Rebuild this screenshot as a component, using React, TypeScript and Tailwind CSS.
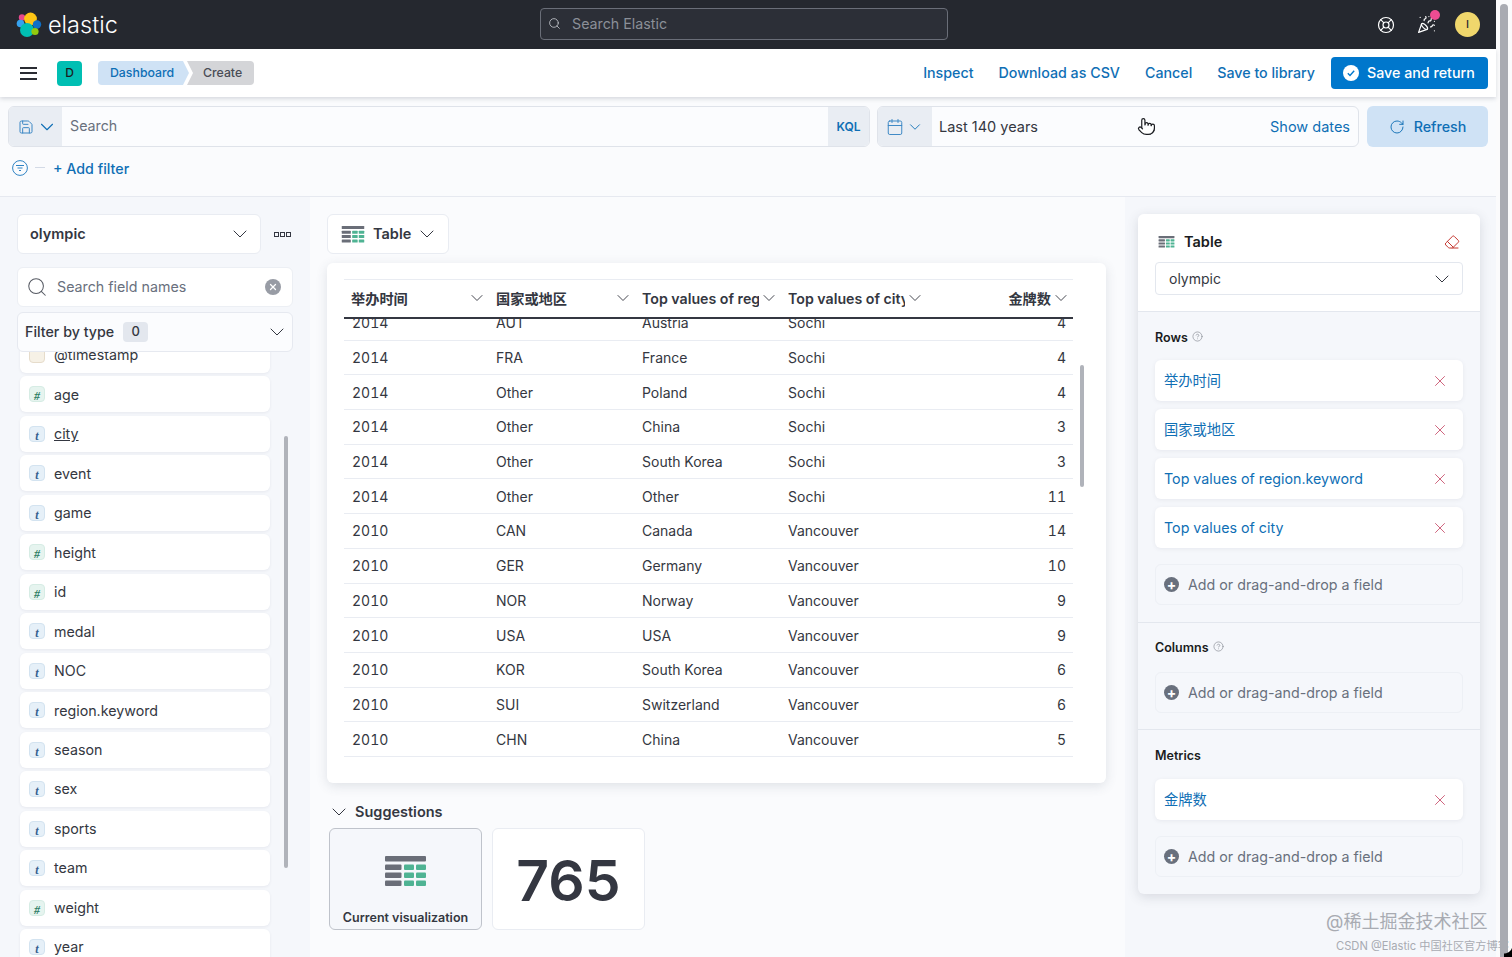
import { Calendar, ChevronDown, CircleHelp, Eraser, LifeBuoy, PartyPopper, Pointer, RotateCw, Save, Search, X } from "lucide-react";

const fields = [
  { name: "@timestamp", type: "d" },
  { name: "age", type: "#" },
  { name: "city", type: "t" },
  { name: "event", type: "t" },
  { name: "game", type: "t" },
  { name: "height", type: "#" },
  { name: "id", type: "#" },
  { name: "medal", type: "t" },
  { name: "NOC", type: "t" },
  { name: "region.keyword", type: "t" },
  { name: "season", type: "t" },
  { name: "sex", type: "t" },
  { name: "sports", type: "t" },
  { name: "team", type: "t" },
  { name: "weight", type: "#" },
  { name: "year", type: "t" }
];

const rows = [
  ["2014", "AUT", "Austria", "Sochi", "4"],
  ["2014", "FRA", "France", "Sochi", "4"],
  ["2014", "Other", "Poland", "Sochi", "4"],
  ["2014", "Other", "China", "Sochi", "3"],
  ["2014", "Other", "South Korea", "Sochi", "3"],
  ["2014", "Other", "Other", "Sochi", "11"],
  ["2010", "CAN", "Canada", "Vancouver", "14"],
  ["2010", "GER", "Germany", "Vancouver", "10"],
  ["2010", "NOR", "Norway", "Vancouver", "9"],
  ["2010", "USA", "USA", "Vancouver", "9"],
  ["2010", "KOR", "South Korea", "Vancouver", "6"],
  ["2010", "SUI", "Switzerland", "Vancouver", "6"],
  ["2010", "CHN", "China", "Vancouver", "5"]
];

const headers = ["举办时间", "国家或地区", "Top values of region.keyword", "Top values of city"];

function TableGlyph({ className }: { className: string }) {
  return (
    <svg viewBox="0 0 41 31" className={className}>
      <rect x="0" y="0" width="41" height="5.5" rx="1" fill="#6a6e78" />
      {[8.5, 16.5, 24.5].map((y) => (
        <g key={y}>
          <rect x="0" y={y} width="16.5" height="5.5" rx="1" fill="#6a6e78" />
          <rect x="19" y={y} width="10" height="5.5" rx="1" fill="#4fb393" />
          <rect x="31" y={y} width="10" height="5.5" rx="1" fill="#4fb393" />
        </g>
      ))}
    </svg>
  );
}

function ElasticLogo() {
  return (
    <svg viewBox="0 0 26 26" className="h-[26px] w-[26px]">
      <circle cx="6" cy="5.5" r="3.2" fill="#e8488b" />
      <circle cx="14.5" cy="7" r="6.4" fill="#fec514" />
      <circle cx="4.5" cy="11.5" r="3.8" fill="#36a2ef" />
      <circle cx="21" cy="12.5" r="4.2" fill="#0f6fc6" />
      <circle cx="11" cy="18" r="7" fill="#00bfb3" />
      <circle cx="19" cy="19.5" r="3.6" fill="#93c90e" />
    </svg>
  );
}

function PlusDot() {
  return (
    <span className="relative grid h-[15px] w-[15px] shrink-0 place-items-center rounded-full bg-[#69707d] text-[14px] font-bold leading-none text-white">
      +
    </span>
  );
}

function FieldIcon({ type }: { type: string }) {
  if (type === "d") {
    return <span className="h-[16px] w-[16px] rounded border border-[#e6dccb] bg-[#f6f1e6]" />;
  }
  const numeric = type === "#";
  return (
    <span
      className={
        numeric
          ? "grid h-[16px] w-[16px] place-items-center rounded border border-[#d6ece4] bg-[#e6f4ef] font-['Liberation_Serif',serif] text-[12px] font-bold italic text-[#2f7f65]"
          : "grid h-[16px] w-[16px] place-items-center rounded border border-[#d3e3f0] bg-[#e6f0f8] font-['Liberation_Serif',serif] text-[12px] font-bold italic text-[#35618f]"
      }
    >
      {type}
    </span>
  );
}

function AddField() {
  return (
    <div className="flex h-[41px] items-center gap-[9px] rounded-md border border-[#edf0f5] px-[8px] text-[14.25px] text-[#69707d]">
      <PlusDot />
      <span>Add or drag-and-drop a field</span>
    </div>
  );
}

function DimensionItem({ label }: { label: string }) {
  return (
    <div className="flex h-[41px] items-center justify-between rounded-md bg-white pl-[9px] pr-[14px] text-[14.25px] text-[#0f6fb5] shadow-[0_1px_4px_rgba(60,70,90,0.08)]">
      <span>{label}</span>
      <X className="h-[18px] w-[18px] text-[#c9536f]" strokeWidth={1.2} />
    </div>
  );
}

export default function App() {
  return (
    <div className="relative flex h-[957px] w-[1512px] overflow-hidden bg-[#f5f7fb] font-['Inter','Noto_Sans_CJK_SC',sans-serif] text-[#343741]">
      <div className="flex w-[1496px] shrink-0 flex-col">
        {/* top nav */}
        <header className="flex h-[49px] shrink-0 items-center justify-between bg-[#25282f] pl-[16px] pr-[16px] text-white">
          <div className="flex w-[524px] items-center gap-[6px]">
            <ElasticLogo />
            <span className="text-[23.5px] font-light leading-none">elastic</span>
          </div>
          <div className="mb-[2px] flex h-[32px] w-[408px] items-center gap-[11px] rounded border border-[#6a6e78] bg-[#2c2f37] px-[7px] text-[14.25px] text-[#8b8f98]">
            <Search className="h-[13px] w-[13px] text-[#c8cad0]" strokeWidth={1.5} />
            <span>Search Elastic</span>
          </div>
          <div className="flex w-[532px] items-center justify-end">
            <LifeBuoy className="mr-[22px] h-[18px] w-[18px]" strokeWidth={1.6} />
            <span className="relative mr-[19px]">
              <PartyPopper className="h-[19px] w-[19px]" strokeWidth={1.5} />
              <span className="absolute -right-[4px] -top-[5px] h-[10px] w-[10px] rounded-full bg-[#ee4c92]" />
            </span>
            <span className="grid h-[25px] w-[25px] place-items-center rounded-full bg-[#f0d76c] text-[11px] font-medium text-[#25282f]">I</span>
          </div>
        </header>

        {/* app bar */}
        <div className="relative z-10 flex h-[48px] shrink-0 items-center justify-between bg-white pl-[20px] pr-[8px] shadow-[0_2px_4px_rgba(60,70,90,0.18)]">
          <div className="flex items-center">
            <span className="flex w-[17px] flex-col gap-[3.5px]">
              <span className="h-[2px] bg-[#2a2c33]" />
              <span className="h-[2px] bg-[#2a2c33]" />
              <span className="h-[2px] bg-[#2a2c33]" />
            </span>
            <span className="ml-[20px] grid h-[25px] w-[25px] place-items-center rounded bg-[#00bfb3] text-[12px] font-medium text-[#1a1c21]">D</span>
            <div className="ml-[16px] flex h-[24px] text-[12.3px] font-medium">
              <span className="z-10 flex w-[91px] items-center rounded-l bg-[#cfe2f5] pl-[12px] text-[#0f6fb5] [clip-path:polygon(0_0,calc(100%-6px)_0,100%_50%,calc(100%-6px)_100%,0_100%)]">Dashboard</span>
              <span className="-ml-[2px] flex w-[67px] items-center rounded-r bg-[#d4d5d8] pl-[16px] text-[#494c55] [clip-path:polygon(0_0,100%_0,100%_100%,0_100%,6px_50%)]">Create</span>
            </div>
          </div>
          <div className="flex items-center gap-[25px] text-[14.25px] font-medium text-[#0f6fb5]">
            <span>Inspect</span>
            <span>Download as CSV</span>
            <span>Cancel</span>
            <span className="mr-[-9px]">Save to library</span>
            <button className="flex h-[32px] w-[157px] items-center gap-[8px] rounded bg-[#0077cc] pl-[12px] text-[14.25px] font-medium text-white">
              <span className="grid h-[16px] w-[16px] place-items-center rounded-full bg-white">
                <svg viewBox="0 0 16 16" className="h-[16px] w-[16px]">
                  <path d="M4.8 8.2l2.2 2.2 4.2-4.6" fill="none" stroke="#0077cc" strokeWidth="1.4" />
                </svg>
              </span>
              Save and return
            </button>
          </div>
        </div>

        {/* query bar */}
        <div className="h-[100px] shrink-0 border-b border-[#e6e9f0] bg-[#fafbfd] px-[8px] pt-[9px]">
          <div className="flex h-[41px] gap-[7px]">
            <div className="flex w-[862px] overflow-hidden rounded-md border border-[#dfe3ea] bg-[#fbfcfe]">
              <div className="flex w-[53px] items-center gap-[2px] bg-[#e9edf3] pl-[9px] text-[#0f6fb5]">
                <Save className="h-[16px] w-[16px] text-[#3b87c4]" strokeWidth={1.5} />
                <ChevronDown className="h-[22px] w-[22px]" strokeWidth={1.2} />
              </div>
              <div className="flex flex-1 items-center pb-[2px] pl-[8px] text-[14.25px] text-[#69707d]">Search</div>
              <div className="flex w-[41px] items-center justify-center bg-[#e9edf3] text-[12px] font-semibold text-[#0f6fb5]">KQL</div>
            </div>
            <div className="flex w-[482px] overflow-hidden rounded-md border border-[#dfe3ea] bg-[#fbfcfe]">
              <div className="flex w-[54px] items-center gap-[2px] bg-[#e9edf3] pl-[8px] text-[#0f6fb5]">
                <Calendar className="h-[18px] w-[18px] text-[#3b87c4]" strokeWidth={1.3} />
                <ChevronDown className="h-[18px] w-[18px]" strokeWidth={1.2} />
              </div>
              <div className="flex flex-1 items-center justify-between pl-[7px] pr-[8px] text-[14.5px]">
                <span>Last 140 years</span>
                <span className="text-[#0f6fb5]">Show dates</span>
              </div>
            </div>
            <button className="ml-[1px] flex w-[121px] items-center justify-center gap-[9px] rounded-md bg-[#cfe2f5] text-[14.25px] font-medium text-[#0f6fb5]">
              <RotateCw className="h-[16px] w-[16px]" strokeWidth={1.4} />
              Refresh
            </button>
          </div>
          <div className="mt-[10px] flex h-[24px] items-center pl-[4px]">
            <svg viewBox="0 0 16 16" className="-mt-[3px] h-[16px] w-[16px] text-[#2f83c4]">
              <circle cx="8" cy="8" r="7.4" fill="none" stroke="currentColor" />
              <path d="M4 5.5h8M5.5 8h5M7 10.5h2" stroke="currentColor" />
            </svg>
            <span className="-mt-[3px] ml-[7px] h-px w-[10px] bg-[#d3dae6]" />
            <span className="ml-[8px] text-[14.25px] font-medium text-[#0f6fb5]">+ Add filter</span>
          </div>
        </div>

        <div className="flex min-h-0 flex-1">
          {/* field list */}
          <aside className="relative w-[310px] shrink-0 overflow-hidden bg-[#f5f7fb] pl-[17px] pt-[17px]">
            <div className="flex items-center">
              <div className="flex h-[40px] w-[244px] items-center justify-between rounded-md border border-[#e9ecf2] bg-white pl-[12px] pr-[8px] text-[14.5px] font-semibold">
                olympic
                <ChevronDown className="h-[24px] w-[24px]" strokeWidth={1} />
              </div>
              <span className="ml-[13px] flex gap-[1px]">
                <span className="h-[5px] w-[5px] border border-[#343741]" />
                <span className="h-[5px] w-[5px] border border-[#343741]" />
                <span className="h-[5px] w-[5px] border border-[#343741]" />
              </span>
            </div>
            <div className="relative z-10 mt-[13px] flex h-[40px] w-[276px] items-center rounded-md border border-[#eceff4] bg-white pl-[8px] pr-[11px] text-[14.25px] text-[#69707d]">
              <Search className="h-[22px] w-[22px] text-[#555962]" strokeWidth={1.1} />
              <span className="ml-[9px] flex-1">Search field names</span>
              <span className="grid h-[16px] w-[16px] place-items-center rounded-full bg-[#989ca5]">
                <X className="h-[10px] w-[10px] text-white" strokeWidth={3} />
              </span>
            </div>
            <div className="relative z-10 mt-[5px] flex h-[40px] w-[276px] items-center justify-between rounded-md border border-[#e6e9f0] bg-[#fbfcfe] pl-[7px] pr-[3px] text-[14.25px] font-medium">
              <span className="flex items-center gap-[9px]">
                Filter by type
                <span className="grid h-[20px] w-[25px] place-items-center rounded bg-[#e3e7ee] text-[13px]">0</span>
              </span>
              <ChevronDown className="h-[24px] w-[24px]" strokeWidth={1} />
            </div>
            <div className="-mt-[15px] ml-[3px] flex w-[250px] flex-col gap-[3.47px]">
              {fields.map((field) => (
                <div key={field.name} className="flex h-[36px] shrink-0 items-center gap-[9px] rounded-md bg-white pl-[9px] text-[14.25px] shadow-[0_1px_3px_rgba(60,70,90,0.08)]">
                  <FieldIcon type={field.type} />
                  <span className={field.name === "city" ? "underline" : ""}>{field.name}</span>
                </div>
              ))}
            </div>
            <span className="absolute left-[284px] top-[239px] h-[432px] w-[4px] rounded-full bg-[#b0b3ba]" />
          </aside>

          {/* workspace */}
          <main className="w-[815px] shrink-0 bg-[#fafbfd] pl-[17px] pt-[17px]">
            <div className="flex h-[40px] w-[122px] items-center rounded-md border border-[#e9ecf2] bg-white pl-[12px] text-[14.5px] font-semibold">
              <TableGlyph className="h-[17px] w-[26px]" />
              <span className="ml-[7px]">Table</span>
              <ChevronDown className="ml-[4px] h-[24px] w-[24px]" strokeWidth={1} />
            </div>
            <section className="relative mt-[9px] h-[520px] w-[779px] rounded-md bg-white px-[17px] pt-[16px] shadow-[0_3px_12px_rgba(60,70,90,0.14)]">
              <div className="w-[729px] border-t border-[#e9ecf2]">
                <div className="flex h-[39px] items-center border-b-2 border-[#343741] text-[14.2px] font-semibold">
                  {headers.map((header, index) => (
                    <div key={header} className={index === 0 ? "flex w-[144px] shrink-0 items-center pl-[7px] pr-[1px]" : "flex w-[146px] shrink-0 items-center pl-[8px] pr-[1px]"}>
                      <span className="min-w-0 flex-1 overflow-hidden whitespace-nowrap">{header}</span>
                      <ChevronDown className="h-[20px] w-[20px] shrink-0" strokeWidth={1.1} />
                    </div>
                  ))}
                  <div className="flex flex-1 items-center justify-end pr-[2px]">
                    金牌数
                    <ChevronDown className="h-[20px] w-[20px]" strokeWidth={1.1} />
                  </div>
                </div>
                <div className="h-[439px] overflow-hidden">
                  <div className="-mt-[13px]">
                    {rows.map((row) => (
                      <div key={row.join()} className="flex h-[34.7px] items-center border-b border-[#e9ecf2] text-[14px] tabular-nums">
                        {row.slice(0, 4).map((cell, index) => (
                          <div key={index} className={index === 0 ? "w-[144px] shrink-0 pl-[8px]" : "w-[146px] shrink-0 pl-[8px]"}>{cell}</div>
                        ))}
                        <div className="flex-1 pr-[7px] text-right">{row[4]}</div>
                      </div>
                    ))}
                  </div>
                </div>
              </div>
              <span className="absolute left-[753px] top-[102px] h-[122px] w-[4px] rounded-full bg-[#b0b3ba]" />
            </section>
            <div className="mt-[17px] flex items-center text-[14.5px] font-semibold">
              <ChevronDown className="h-[24px] w-[24px]" strokeWidth={1} />
              <span className="ml-[4px]">Suggestions</span>
            </div>
            <div className="mt-[4px] flex gap-[10px] pl-[2px]">
              <div className="flex h-[102px] w-[153px] flex-col items-center rounded-md border border-[#bfc3cb] bg-[#f5f7fb] pt-[27px]">
                <TableGlyph className="h-[31px] w-[41px]" />
                <span className="mt-[22px] text-[12.5px] font-semibold">Current visualization</span>
              </div>
              <div className="grid h-[102px] w-[153px] place-items-center rounded-md border border-[#e9ecf2] bg-white pt-[2px] text-[57px] font-semibold leading-none">765</div>
            </div>
          </main>

          {/* config panel */}
          <aside className="min-w-0 flex-1 pl-[13px] pt-[17px]">
            <div className="w-[342px] overflow-hidden rounded-md bg-[#f5f7fb] shadow-[0_3px_12px_rgba(60,70,90,0.16)]">
              <div className="h-[98px] border-b border-[#e3e7ee] bg-white px-[17px] pt-[17px]">
                <div className="flex h-[22px] items-center justify-between pl-[3px] pr-[3px]">
                  <span className="flex items-center gap-[9px] text-[14.5px] font-semibold text-[#1a1c21]">
                    <TableGlyph className="h-[12px] w-[17px]" />
                    Table
                  </span>
                  <Eraser className="h-[16px] w-[16px] text-[#c4362f]" strokeWidth={1.5} />
                </div>
                <div className="mt-[9px] flex h-[33px] w-[308px] items-center justify-between rounded border border-[#e3e7ee] bg-white pl-[13px] pr-[8px] text-[14px]">
                  olympic
                  <ChevronDown className="h-[24px] w-[24px]" strokeWidth={1} />
                </div>
              </div>
              <div className="h-[311px] border-b border-[#e3e7ee] px-[17px] pt-[18px]">
                <div className="flex h-[16px] items-center gap-[4px] text-[12.5px] font-semibold text-[#1a1c21]">
                  Rows
                  <CircleHelp className="-mt-[3px] h-[11px] w-[11px] text-[#8b8f98]" strokeWidth={1.5} />
                </div>
                <div className="mt-[14px] flex w-[308px] flex-col gap-[8px]">
                  <DimensionItem label="举办时间" />
                  <DimensionItem label="国家或地区" />
                  <DimensionItem label="Top values of region.keyword" />
                  <DimensionItem label="Top values of city" />
                </div>
                <div className="mt-[16px] w-[308px]">
                  <AddField />
                </div>
              </div>
              <div className="h-[107px] border-b border-[#e3e7ee] px-[17px] pt-[17px]">
                <div className="flex h-[16px] items-center gap-[4px] text-[12.5px] font-semibold text-[#1a1c21]">
                  Columns
                  <CircleHelp className="-mt-[3px] h-[11px] w-[11px] text-[#8b8f98]" strokeWidth={1.5} />
                </div>
                <div className="mt-[16px] w-[308px]">
                  <AddField />
                </div>
              </div>
              <div className="h-[164px] px-[17px] pt-[18px]">
                <div className="flex h-[16px] items-center text-[12.5px] font-semibold text-[#1a1c21]">Metrics</div>
                <div className="mt-[15px] w-[308px]">
                  <DimensionItem label="金牌数" />
                </div>
                <div className="mt-[16px] w-[308px]">
                  <AddField />
                </div>
              </div>
            </div>
          </aside>
        </div>
      </div>

      {/* page scrollbar */}
      <div className="flex-1 bg-[#fbfbfc] pl-[4px] pt-[4px]">
        <div className="h-full w-[8px] rounded-t-full bg-[#a9abb2]" />
      </div>

      {/* cursor + watermark sit over the capture */}
      <Pointer className="absolute left-[1137px] top-[117px] h-[19px] w-[19px] fill-white text-[#1a1c21]" strokeWidth={1.5} />
      <span className="absolute left-[1326px] top-[910px] text-[18px] leading-[24px] text-[#a8abb2]">@稀土掘金技术社区</span>
      <span className="absolute left-[1336px] top-[939px] text-[11.2px] leading-[14px] text-[#a8abb2]">CSDN @Elastic 中国社区官方博客</span>
      <span className="absolute bottom-0 right-0 h-[12px] w-[8px] bg-[radial-gradient(circle_at_0_0,transparent_8px,#000_9px)]" />
    </div>
  );
}
